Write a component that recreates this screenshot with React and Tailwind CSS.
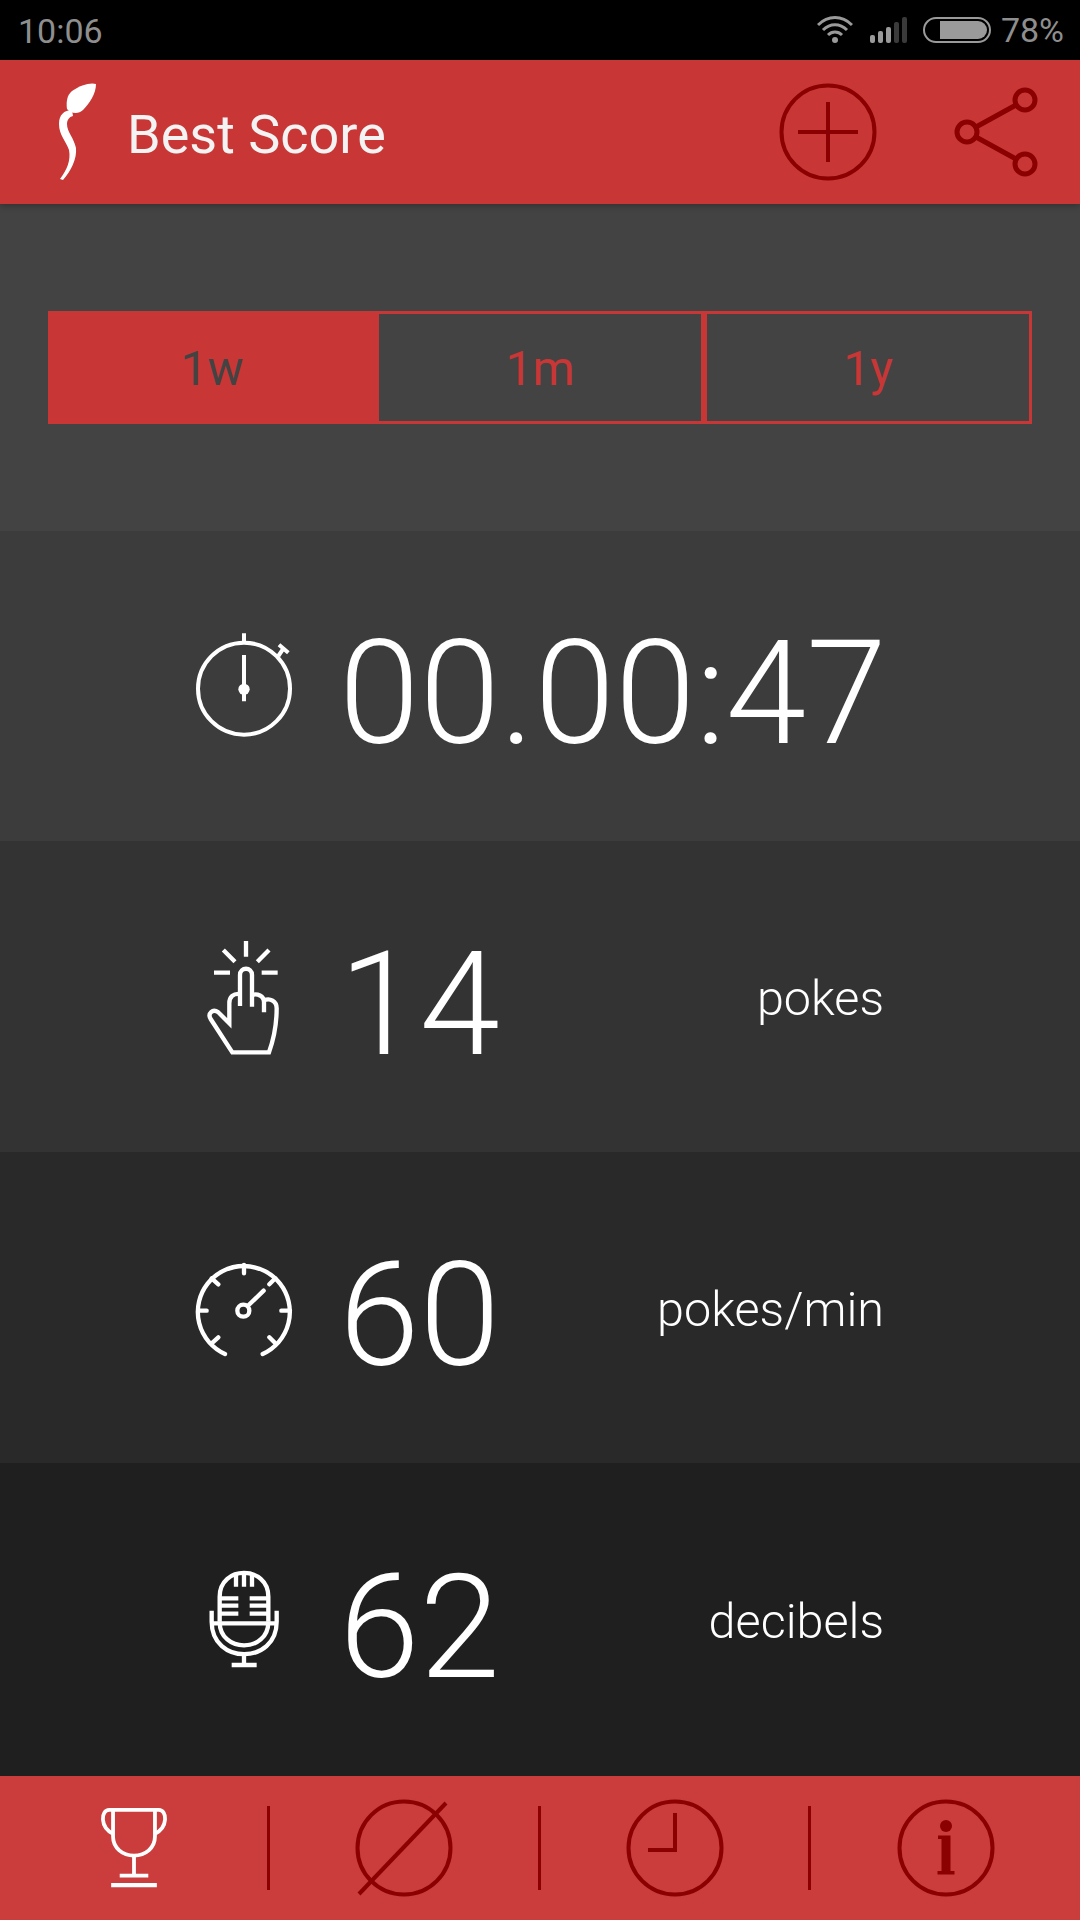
import React from 'react'

const DARK = '#8b0000'

function Logo() {
  return (
    <svg width="42" height="100" viewBox="0 0 42 100" className="shrink-0" fill="#fff">
      <path d="M40 2C35 0 24 3 16 9C11 13 10 20 11 27C14 31 22 33 27 28C33 22 40 12 40 2Z" />
      <path d="M16 28C8 28 3 33 3 42C3 53 10 59 13 68C15 78 11 88 4 97L7 98C15 89 21 77 20 66C18 56 11 50 11 42C11 38 13 35 17 34Z" />
    </svg>
  )
}

function PlusIcon() {
  return (
    <svg width="100" height="100" viewBox="0 0 100 100" fill="none" stroke={DARK} strokeWidth="4">
      <circle cx="50" cy="50" r="46.5" />
      <path d="M50 20V80M20 50H80" />
    </svg>
  )
}

function ShareIcon() {
  return (
    <svg width="88" height="92" viewBox="0 0 88 92" fill="none" stroke={DARK} strokeWidth="5">
      <circle cx="71" cy="14" r="10" />
      <circle cx="13" cy="46" r="10" />
      <circle cx="71" cy="78" r="10" />
      <path d="M22 41L62 19M22 51L62 73" />
    </svg>
  )
}

function StatusBar() {
  return (
    <div className="h-[60px] bg-black flex items-center pl-[18px] pr-[16px] text-[#8e8e8e] text-[34px]">
      <span className="mt-[2px]">10:06</span>
      <svg width="36" height="28" viewBox="0 0 36 28" fill="none" stroke="#9a9a9a" strokeWidth="3" className="ml-auto">
        <path d="M1 9C11 -1 25 -1 35 9" />
        <path d="M6 14C13 7 23 7 30 14" />
        <path d="M11 19C15 15 21 15 25 19" />
        <circle cx="18" cy="24" r="3" fill="#9a9a9a" stroke="none" />
      </svg>
      <div className="flex items-end gap-[3px] ml-[17px] h-[26px]">
        <div className="w-[5px] h-[8px] bg-[#9a9a9a] rounded-[2px]" />
        <div className="w-[5px] h-[12px] bg-[#9a9a9a] rounded-[2px]" />
        <div className="w-[5px] h-[16px] bg-[#9a9a9a] rounded-[2px]" />
        <div className="w-[5px] h-[21px] bg-[#3a3a3a] rounded-[2px]" />
        <div className="w-[5px] h-[26px] bg-[#3a3a3a] rounded-[2px]" />
      </div>
      <div className="ml-[16px] w-[68px] h-[26px] border-2 border-[#9a9a9a] rounded-[13px] p-[2px] pl-[15px]">
        <div className="h-full bg-[#9a9a9a] rounded-r-[9px]" />
      </div>
      <span className="ml-[10px] mt-[1px]">78%</span>
    </div>
  )
}

function Header() {
  return (
    <div className="relative z-10 h-[144px] bg-[#c83636] flex items-center shadow-[0_2px_6px_rgba(0,0,0,0.25)]">
      <div className="ml-[56px]">
        <Logo />
      </div>
      <span className="ml-[29px] mt-[4px] text-[54px] text-[#f3f3f3]">Best Score</span>
      <div className="ml-auto mr-[76px]">
        <PlusIcon />
      </div>
      <div className="mr-[38px]">
        <ShareIcon />
      </div>
    </div>
  )
}

function RangeTabs() {
  return (
    <div className="h-[327px] bg-[#434343] flex items-center px-[48px]">
      <div className="w-full h-[113px] flex gap-[6px] p-[3px] bg-[#c83636] text-[48px] text-[#c83636]">
        <div className="flex-1 bg-[#c83636] text-[#434343] flex items-center justify-center pt-[2px]">1w</div>
        <div className="flex-1 bg-[#434343] flex items-center justify-center pt-[2px]">1m</div>
        <div className="flex-1 bg-[#434343] flex items-center justify-center pt-[2px]">1y</div>
      </div>
    </div>
  )
}

// icon drawings are in 3x units, hence the 420 viewBox on a 140px box
function StopwatchIcon() {
  return (
    <svg width="140" height="140" viewBox="0 20 420 420" fill="none" stroke="#fff" strokeWidth="12">
      <circle cx="222" cy="238" r="138" />
      <path d="M222 72V100M222 137V276M325 140L340 118M327 106L355 130" />
      <circle cx="222" cy="240" r="17" fill="#fff" stroke="none" />
    </svg>
  )
}

function HandIcon() {
  return (
    <svg width="140" height="140" viewBox="0 6 420 420" fill="none" stroke="#fff" strokeWidth="13">
      <path d="M228 48V95M160 75L195 110M297 75L262 110M132 143H180M275 143H323" />
      <path d="M210 243V150C210 125 246 125 246 150V245" />
      <path d="M246 210C262 205 282 212 282 232V262" />
      <path d="M282 226C300 218 320 228 320 250C320 290 312 340 297 382H187L122 282C112 265 128 250 145 262L178 295V235C178 215 190 205 210 207" />
    </svg>
  )
}

function GaugeIcon() {
  return (
    <svg width="140" height="140" viewBox="0 -6 420 420" fill="none" stroke="#fff" strokeWidth="13" strokeLinecap="round">
      <path d="M165 342A138 138 0 1 1 278 342" />
      <path d="M222 75V100M125 115L145 133M316 115L298 133M85 212H110M360 212H334M125 310L145 292M316 310L298 292" />
      <circle cx="220" cy="212" r="18" />
      <path d="M233 198L281 152" />
    </svg>
  )
}

function MicIcon() {
  return (
    <svg width="140" height="140" viewBox="0 -15 420 420" fill="none" stroke="#fff" strokeWidth="13">
      <path d="M149 200V125C149 30 295 30 295 125V200" />
      <path d="M125 167V200C125 330 320 330 320 200V167" />
      <path d="M149 200C149 295 295 295 295 200" />
      <path d="M126 205H320" />
      <path d="M198 60V95M222 58V95M246 60V95" />
      <path d="M149 130H205M239 130H295M149 152H205M239 152H295M149 176H205M239 176H295" />
      <path d="M222 295V330M185 330H260" />
    </svg>
  )
}

function StatRow({ className, icon, value, label }) {
  return (
    <div className={`${className} flex items-center pl-[170px] pr-[196px]`}>
      <div className="w-[140px] h-[140px] shrink-0">{icon}</div>
      <span className="ml-[29px] mt-[15px] text-[145px] leading-none font-light text-white">{value}</span>
      {label && <span className="ml-auto mt-[6px] text-[48.5px] font-light text-white">{label}</span>}
    </div>
  )
}

function FooterIcon({ children }) {
  return (
    <svg width="100" height="100" viewBox="0 0 100 100" fill="none" stroke={DARK} strokeWidth="4">
      <circle cx="50" cy="50" r="46.5" />
      {children}
    </svg>
  )
}

function Footer() {
  return (
    <div className="h-[144px] bg-[#cb3c3c] flex items-center">
      <div className="w-[267px] flex justify-center">
        <svg width="68" height="80" viewBox="0 0 70 84" fill="none" stroke="#fff" strokeWidth="4">
          <path d="M13 2H57V30C57 42 47 50 35 50C23 50 13 42 13 30Z" />
          <path d="M13 2H9C0 2 -1 20 13 27M57 2H61C70 2 71 20 57 27" />
          <path d="M35 50V71M20 71H50" />
          <path d="M11 81H59" strokeWidth="4.5" />
        </svg>
      </div>
      <div className="w-[271px] h-[84px] border-l-[3px] border-[#8b0000] flex items-center justify-center">
        <FooterIcon>
          <path d="M5 96L92 5" />
        </FooterIcon>
      </div>
      <div className="w-[270px] h-[84px] border-l-[3px] border-[#8b0000] flex items-center justify-center">
        <FooterIcon>
          <path d="M50 15V52H23" />
        </FooterIcon>
      </div>
      <div className="flex-1 h-[84px] border-l-[3px] border-[#8b0000] flex items-center justify-center">
        <FooterIcon>
          <circle cx="50" cy="28" r="6" fill={DARK} stroke="none" />
          <path d="M42 37.5H54.5V73H58.5V76.5H41.5V73H45.5V41H42Z" fill={DARK} stroke="none" />
        </FooterIcon>
      </div>
    </div>
  )
}

export default function App() {
  return (
    <div className="w-[1080px] h-[1920px] flex flex-col overflow-hidden font-['Roboto',sans-serif]">
      <StatusBar />
      <Header />
      <RangeTabs />
      <div className="flex-1 flex flex-col">
        <StatRow className="h-[310px] bg-[#3c3c3c]" icon={<StopwatchIcon />} value="00.00:47" />
        <StatRow className="h-[311px] bg-[#333333]" icon={<HandIcon />} value="14" label="pokes" />
        <StatRow className="h-[311px] bg-[#292929]" icon={<GaugeIcon />} value="60" label="pokes/min" />
        <StatRow className="flex-1 bg-[#1f1f1f]" icon={<MicIcon />} value="62" label="decibels" />
      </div>
      <Footer />
    </div>
  )
}
